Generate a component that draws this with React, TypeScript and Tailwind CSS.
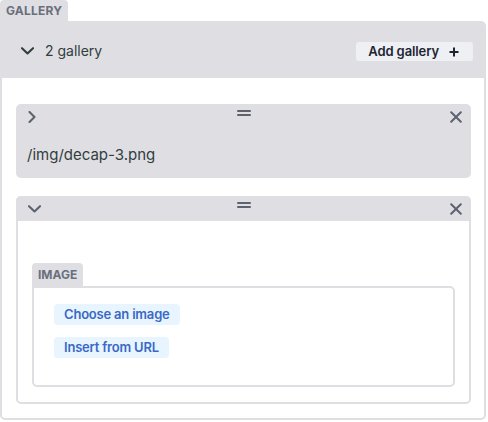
function ChevronDown({ className }: { className?: string }) {
  return (
    <svg className={className} width="13" height="8" viewBox="0 0 13 8" fill="none">
      <path d="M1 1.2l5.5 5.3 5.5-5.3" stroke="currentColor" strokeWidth="2.1" strokeLinecap="round" strokeLinejoin="round" />
    </svg>
  );
}

function ChevronRight({ className }: { className?: string }) {
  return (
    <svg className={className} width="8" height="12" viewBox="0 0 8 12" fill="none">
      <path d="M1.5 1l5 5-5 5" stroke="currentColor" strokeWidth="2.1" strokeLinecap="round" strokeLinejoin="round" />
    </svg>
  );
}

function Close() {
  return (
    <svg width="12" height="12" viewBox="0 0 12 12" fill="none">
      <path d="M1.2 1.2l9.6 9.6M10.8 1.2l-9.6 9.6" stroke="currentColor" strokeWidth="2" strokeLinecap="round" />
    </svg>
  );
}

function Plus() {
  return (
    <svg width="10" height="10" viewBox="0 0 10 10" fill="none">
      <path d="M5 0.5v9M0.5 5h9" stroke="currentColor" strokeWidth="2" />
    </svg>
  );
}

function DragHandle() {
  return (
    <div className="flex flex-col gap-[2px] w-[14px]">
      <div className="h-[2px] bg-[#5d626f] rounded-full" />
      <div className="h-[2px] bg-[#5d626f] rounded-full" />
    </div>
  );
}

function ItemBar({ open }: { open: boolean }) {
  return (
    <div className="relative h-[25px] flex items-center justify-between pl-[12px] pr-[9px] text-[#5d626f]">
      {open ? <ChevronDown /> : <ChevronRight />}
      <div className="absolute left-1/2 top-[6px] -translate-x-1/2">
        <DragHandle />
      </div>
      <Close />
    </div>
  );
}

export default function App() {
  return (
    <div className="w-[488px] h-[422px] bg-white font-['Inter',sans-serif] text-[#313d3e]">
      <div className="flex">
        <div className="flex items-center h-[21px] px-[6px] bg-[#dfdfe3] rounded-t-[4px] text-[12px] font-bold tracking-[0.2px] text-[#6a6f7c]">
          GALLERY
        </div>
      </div>
      <div className="w-[486px] h-[399px] border-2 border-[#dfdfe3] rounded-b-[5px] rounded-tr-[5px]">
        <div className="h-[55px] bg-[#dfdfe3] flex items-center justify-between pl-[19px] pr-[11px]">
          <div className="flex items-center gap-[11px]">
            <ChevronDown className="text-[#313d3e]" />
            <span className="text-[14px] text-[#313d3e]">2 gallery</span>
          </div>
          <button className="h-[19px] mt-[2px] flex items-center gap-[10px] pl-[12px] pr-[14px] bg-[#eff0f4] rounded-[3px] text-[13px] font-semibold tracking-[-0.1px] text-[#1e2532]">
            <span>Add gallery</span>
            <Plus />
          </button>
        </div>

        <div className="pl-[14px] pr-[13px] pt-[26px] flex flex-col gap-[18px]">
          <div className="h-[74px] bg-[#dfdfe3] rounded-[5px]">
            <ItemBar open={false} />
            <div className="pl-[11px] pt-[15px] text-[15px] text-[#313d3e]">/img/decap-3.png</div>
          </div>

          <div className="h-[208px] border-2 border-[#dfdfe3] rounded-[5px] bg-white">
            <div className="-mx-[2px] -mt-[2px] bg-[#dfdfe3] rounded-t-[5px]">
              <ItemBar open={true} />
            </div>
            <div className="px-[14px] pt-[42px]">
              <div className="flex">
                <div className="flex items-center h-[23px] px-[6px] bg-[#dfdfe3] rounded-t-[4px] text-[12px] font-bold text-[#6a6f7c]">
                  IMAGE
                </div>
              </div>
              <div className="h-[101px] border-2 border-[#dfdfe3] rounded-b-[5px] rounded-tr-[5px] pl-[20px] pt-[16px] flex flex-col items-start gap-[12px]">
                <button className="h-[21px] px-[10px] bg-[#e8f5fe] rounded-[4px] text-[13px] font-semibold tracking-[-0.2px] text-[#3a69c7]">
                  Choose an image
                </button>
                <button className="h-[21px] px-[10px] bg-[#e8f5fe] rounded-[4px] text-[13px] font-semibold tracking-[-0.2px] text-[#3a69c7]">
                  Insert from URL
                </button>
              </div>
            </div>
          </div>
        </div>
      </div>
    </div>
  );
}
